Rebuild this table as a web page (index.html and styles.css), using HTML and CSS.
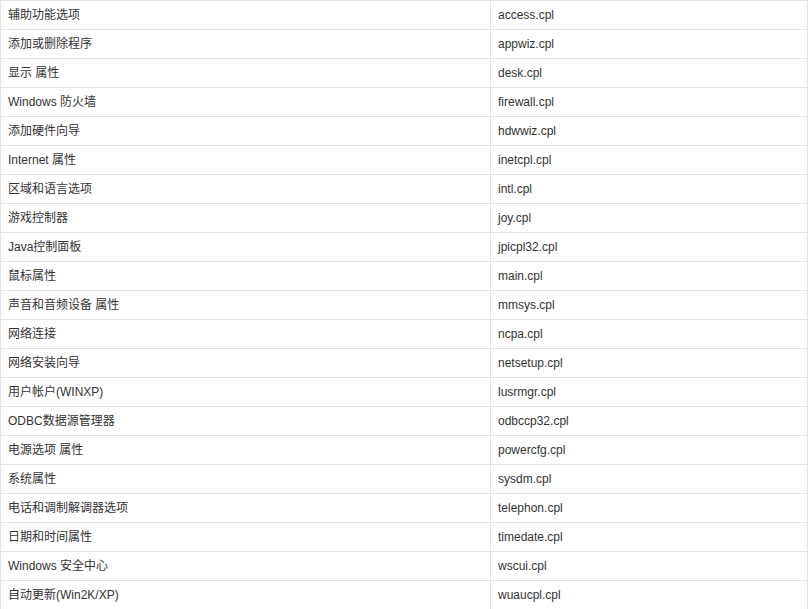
FILE: index.html
```html
<!DOCTYPE html>
<html>
<head>
<meta charset="utf-8">
<link rel="stylesheet" href="styles.css">
</head>
<body>
<table class="cpl">
<tbody>
<tr><td class="name">辅助功能选项</td><td class="file">access.cpl</td></tr>
<tr><td class="name">添加或删除程序</td><td class="file">appwiz.cpl</td></tr>
<tr><td class="name">显示 属性</td><td class="file">desk.cpl</td></tr>
<tr><td class="name">Windows 防火墙</td><td class="file">firewall.cpl</td></tr>
<tr><td class="name">添加硬件向导</td><td class="file">hdwwiz.cpl</td></tr>
<tr><td class="name">Internet 属性</td><td class="file">inetcpl.cpl</td></tr>
<tr><td class="name">区域和语言选项</td><td class="file">intl.cpl</td></tr>
<tr><td class="name">游戏控制器</td><td class="file">joy.cpl</td></tr>
<tr><td class="name">Java控制面板</td><td class="file">jpicpl32.cpl</td></tr>
<tr><td class="name">鼠标属性</td><td class="file">main.cpl</td></tr>
<tr><td class="name">声音和音频设备 属性</td><td class="file">mmsys.cpl</td></tr>
<tr><td class="name">网络连接</td><td class="file">ncpa.cpl</td></tr>
<tr><td class="name">网络安装向导</td><td class="file">netsetup.cpl</td></tr>
<tr><td class="name">用户帐户(WINXP)</td><td class="file">lusrmgr.cpl</td></tr>
<tr><td class="name">ODBC数据源管理器</td><td class="file">odbccp32.cpl</td></tr>
<tr><td class="name">电源选项 属性</td><td class="file">powercfg.cpl</td></tr>
<tr><td class="name">系统属性</td><td class="file">sysdm.cpl</td></tr>
<tr><td class="name">电话和调制解调器选项</td><td class="file">telephon.cpl</td></tr>
<tr><td class="name">日期和时间属性</td><td class="file">timedate.cpl</td></tr>
<tr><td class="name">Windows 安全中心</td><td class="file">wscui.cpl</td></tr>
<tr><td class="name">自动更新(Win2K/XP)</td><td class="file">wuaucpl.cpl</td></tr>
</tbody>
</table>
</body>
</html>
```

FILE: styles.css
```css
html, body {
  margin: 0;
  padding: 0;
  background: #ffffff;
}
body {
  font-family: "Liberation Sans", "Noto Sans CJK SC", Arial, sans-serif;
  font-size: 12px;
  color: #333333;
}
.cpl {
  border-collapse: collapse;
  width: 808px;
  table-layout: fixed;
}
.cpl td {
  border: 1px solid #e3e3e3;
  height: 28px;
  padding: 0 7px;
  box-sizing: border-box;
  line-height: 28px;
  vertical-align: middle;
  white-space: nowrap;
}
.cpl td.name {
  width: 490px;
}
.cpl td.file {
  padding-left: 7px;
}
```
